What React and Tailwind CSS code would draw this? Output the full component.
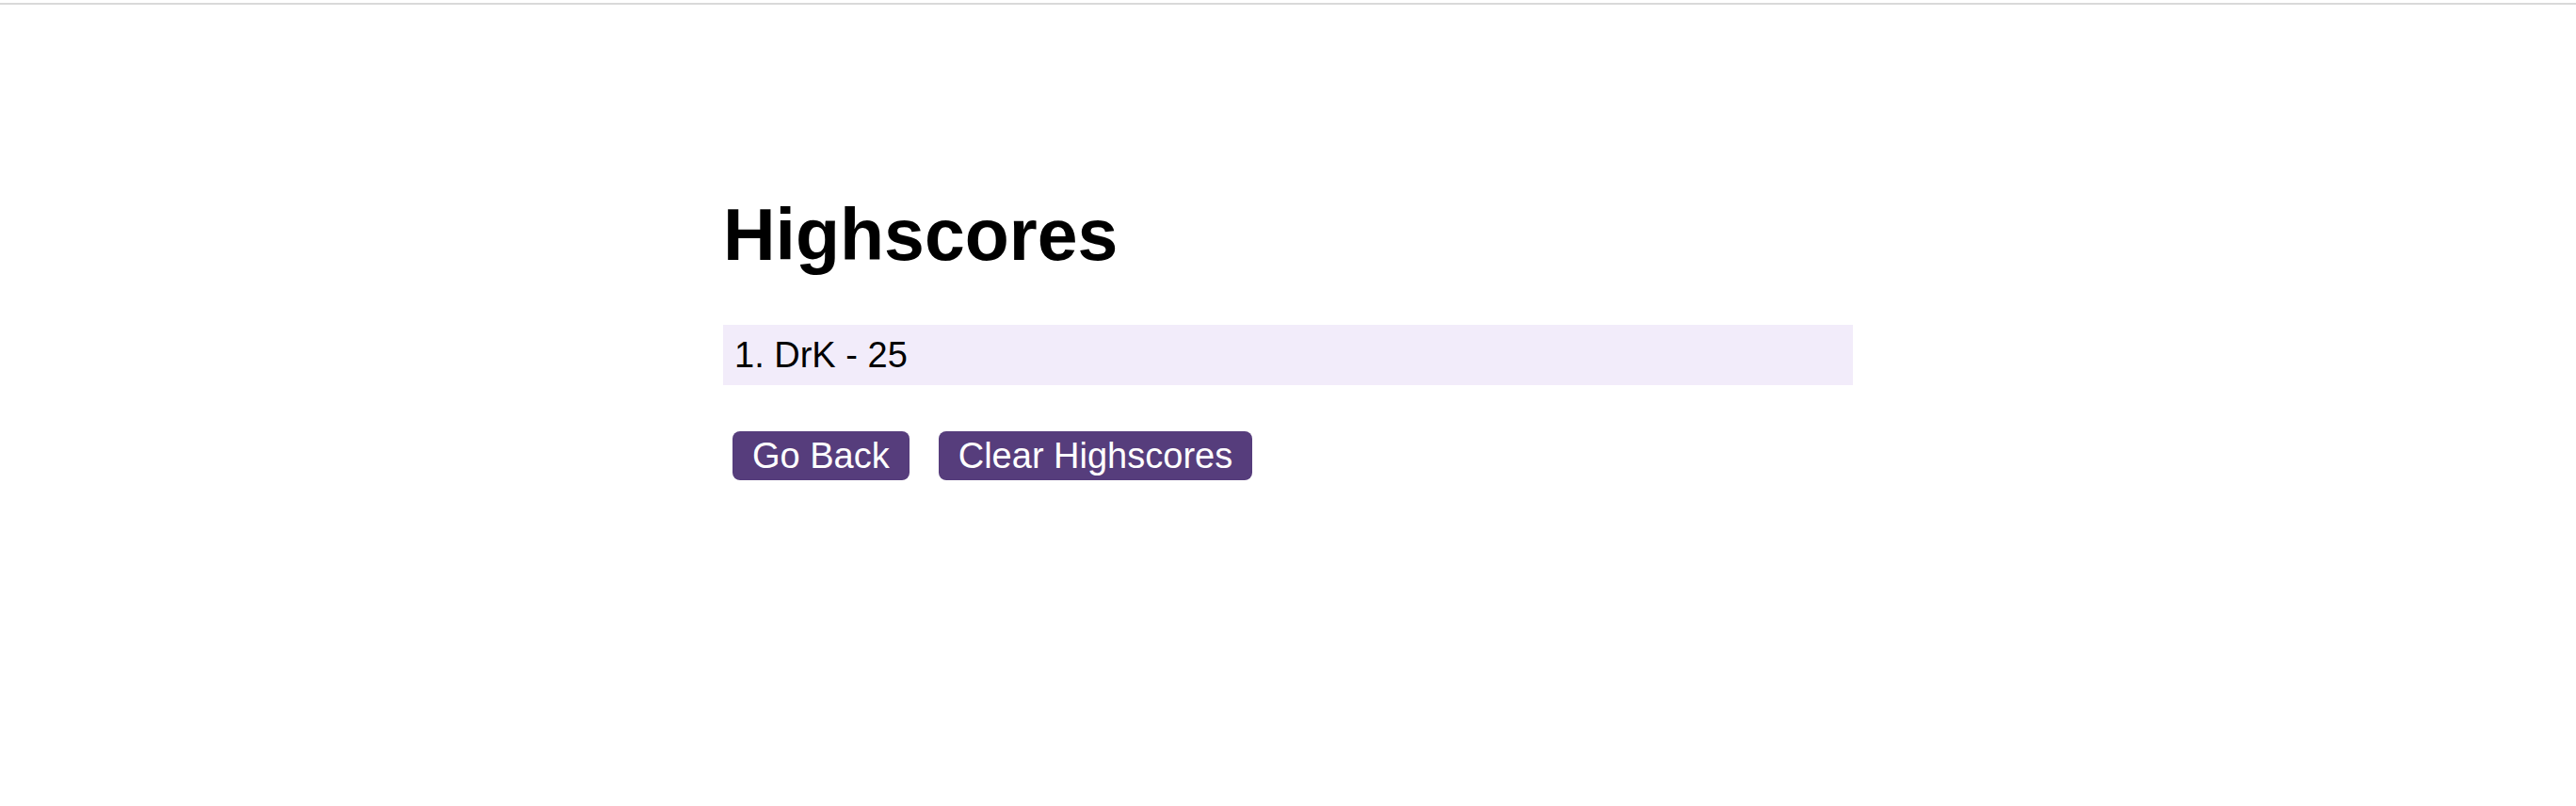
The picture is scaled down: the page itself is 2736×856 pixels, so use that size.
export default function App() {
  const scores = [{ name: 'DrK', score: 25 }]

  return (
    <div className="min-h-screen bg-white font-['Liberation_Sans',Arial,sans-serif] text-black">
      <div className="h-[3px]" />
      <div className="h-[2px] bg-[#d9d9d9]" />
      <main className="mx-auto w-[1200px] pt-[201px]">
        <h1 className="text-[77px] leading-[87px] font-bold">Highscores</h1>
        <ol className="mt-[52px]">
          {scores.map((s, i) => (
            <li key={s.name} className="bg-[#f2ecfa] px-[12px] py-[10px] text-[38px] leading-[44px]">
              {i + 1}. {s.name} - {s.score}
            </li>
          ))}
        </ol>
        <div className="mt-[49px] ml-[10px] flex gap-[31px]">
          <button className="rounded-[8px] bg-[#563d7c] px-[21px] py-[4px] text-[38px] leading-[44px] text-white">
            Go Back
          </button>
          <button className="rounded-[8px] bg-[#563d7c] px-[21px] py-[4px] text-[38px] leading-[44px] text-white">
            Clear Highscores
          </button>
        </div>
      </main>
    </div>
  )
}
